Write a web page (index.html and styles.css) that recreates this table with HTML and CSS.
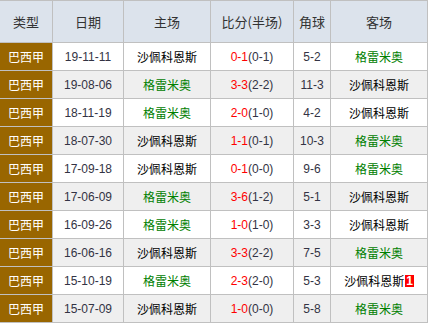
FILE: index.html
```html
<!DOCTYPE html>
<html lang="zh">
<head>
<meta charset="utf-8">
<link rel="stylesheet" href="styles.css">
</head>
<body>
<div class="grid">
  <div class="row head">
    <div>类型</div><div>日期</div><div>主场</div><div>比分(半场)</div><div>角球</div><div>客场</div>
  </div>
  <div class="row">
    <div class="lg">巴西甲</div><div class="dt">19-11-11</div><div class="tm">沙佩科恩斯</div><div class="sc"><span class="r">0-1</span>(0-1)</div><div class="ck">5-2</div><div class="tm g">格雷米奥</div>
  </div>
  <div class="row alt">
    <div class="lg">巴西甲</div><div class="dt">19-08-06</div><div class="tm g">格雷米奥</div><div class="sc"><span class="r">3-3</span>(2-2)</div><div class="ck">11-3</div><div class="tm">沙佩科恩斯</div>
  </div>
  <div class="row">
    <div class="lg">巴西甲</div><div class="dt">18-11-19</div><div class="tm g">格雷米奥</div><div class="sc"><span class="r">2-0</span>(1-0)</div><div class="ck">4-2</div><div class="tm">沙佩科恩斯</div>
  </div>
  <div class="row alt">
    <div class="lg">巴西甲</div><div class="dt">18-07-30</div><div class="tm">沙佩科恩斯</div><div class="sc"><span class="r">1-1</span>(0-1)</div><div class="ck">10-3</div><div class="tm g">格雷米奥</div>
  </div>
  <div class="row">
    <div class="lg">巴西甲</div><div class="dt">17-09-18</div><div class="tm">沙佩科恩斯</div><div class="sc"><span class="r">0-1</span>(0-0)</div><div class="ck">9-6</div><div class="tm g">格雷米奥</div>
  </div>
  <div class="row alt">
    <div class="lg">巴西甲</div><div class="dt">17-06-09</div><div class="tm g">格雷米奥</div><div class="sc"><span class="r">3-6</span>(1-2)</div><div class="ck">5-1</div><div class="tm">沙佩科恩斯</div>
  </div>
  <div class="row">
    <div class="lg">巴西甲</div><div class="dt">16-09-26</div><div class="tm g">格雷米奥</div><div class="sc"><span class="r">1-0</span>(1-0)</div><div class="ck">3-3</div><div class="tm">沙佩科恩斯</div>
  </div>
  <div class="row alt">
    <div class="lg">巴西甲</div><div class="dt">16-06-16</div><div class="tm">沙佩科恩斯</div><div class="sc"><span class="r">3-3</span>(2-2)</div><div class="ck">7-5</div><div class="tm g">格雷米奥</div>
  </div>
  <div class="row">
    <div class="lg">巴西甲</div><div class="dt">15-10-19</div><div class="tm g">格雷米奥</div><div class="sc"><span class="r">2-3</span>(2-0)</div><div class="ck">5-3</div><div class="tm">沙佩科恩斯<span class="badge">1</span></div>
  </div>
  <div class="row alt">
    <div class="lg">巴西甲</div><div class="dt">15-07-09</div><div class="tm">沙佩科恩斯</div><div class="sc"><span class="r">1-0</span>(0-0)</div><div class="ck">5-8</div><div class="tm g">格雷米奥</div>
  </div>
</div>
</body>
</html>
```

FILE: styles.css
```css
html, body {
  margin: 0;
  padding: 0;
  background: #ffffff;
}
.grid {
  width: 428px;
  box-sizing: border-box;
  display: grid;
  grid-template-columns: 52px 70px 86px 82px 36px 96px;
  grid-template-rows: 41px repeat(10, 27px);
  gap: 1px;
  padding: 1px 1px 1px 0;
  background: #c0c0c0;
  font-family: "Liberation Sans", "Noto Sans CJK SC", sans-serif;
  font-size: 12px;
}
.row {
  display: contents;
}
.row > div {
  display: flex;
  align-items: center;
  justify-content: center;
  background: #ffffff;
  color: #000000;
  white-space: nowrap;
  line-height: 1;
}
.row.alt > div {
  background: #efefef;
}
.head > div {
  background: #dce3ec;
  color: #333333;
  font-size: 13px;
  font-family: "Noto Sans CJK SC", sans-serif;
}
.row > .lg {
  background: #996600;
  color: #ffffff;
  font-family: "Noto Sans CJK SC", sans-serif;
}
.row.alt > .lg {
  background: #996600;
}
.row > .dt,
.row > .sc,
.row > .ck {
  color: #333344;
}
.tm {
  font-family: "Noto Sans CJK SC", sans-serif;
}
.row > .g {
  color: #008000;
}
.r {
  color: #ff0000;
}
.badge {
  display: inline-block;
  background: #ff0000;
  color: #ffffff;
  font-family: "Liberation Sans", sans-serif;
  font-weight: bold;
  font-size: 12px;
  line-height: 12px;
  padding: 0 1px;
  margin-left: 1px;
}
```
